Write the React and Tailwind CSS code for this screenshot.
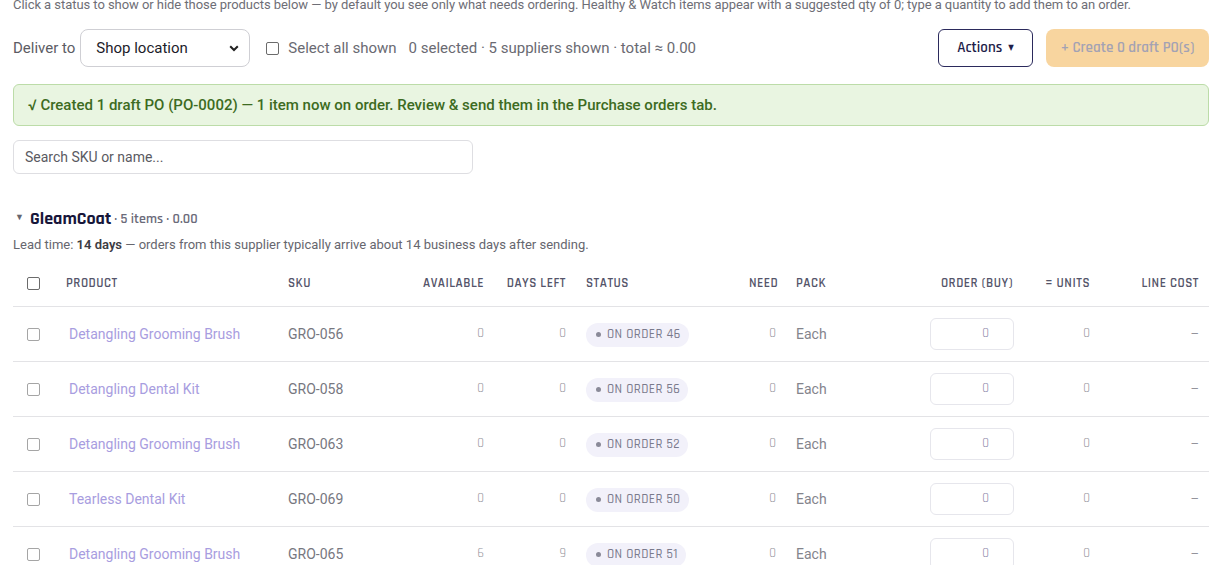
import React from "react";

const DISPLAY = { fontFamily: '"Rajdhani","Liberation Sans Narrow","DejaVu Sans Condensed","Roboto Condensed",sans-serif' };

const rows = [
  { name: "Detangling Grooming Brush", sku: "GRO-056", avail: 0, days: 0, order: 46 },
  { name: "Detangling Dental Kit", sku: "GRO-058", avail: 0, days: 0, order: 56 },
  { name: "Detangling Grooming Brush", sku: "GRO-063", avail: 0, days: 0, order: 52 },
  { name: "Tearless Dental Kit", sku: "GRO-069", avail: 0, days: 0, order: 50 },
  { name: "Detangling Grooming Brush", sku: "GRO-065", avail: 6, days: 9, order: 51 },
];

function Box({ dark }) {
  return (
    <span
      className={
        "inline-block w-[13px] h-[13px] rounded-[2px] border bg-white align-middle " +
        (dark ? "border-[#6b6b6b]" : "border-[#a5a5a5]")
      }
    />
  );
}

export default function App() {
  return (
    <div className="w-[1232px] h-[565px] overflow-hidden bg-white pl-[13px]" style={{ fontFamily: 'Roboto,"Liberation Sans",Arial,sans-serif' }}>
      <div className="w-[1196px]">
        <div className="mt-[-4px] text-[13px] leading-[18px] text-[#6e6e76] whitespace-nowrap tracking-[-0.05px]">
          Click a status to show or hide those products below — by default you see only what needs ordering. Healthy &amp; Watch items appear with a suggested qty of 0; type a quantity to add them to an order.
        </div>

        <div className="mt-[15px] flex items-center h-[38px]">
          <span className="text-[15px] text-[#5c5c64]">Deliver to</span>
          <div className="ml-[5px] relative w-[170px] h-[38px] rounded-lg border border-[#cfcfd4] flex items-center pl-[15px] text-[15px] text-[#1c1c2a]">
            Shop location
            <svg className="absolute right-[10px] top-[15px]" width="10" height="7" viewBox="0 0 10 7">
              <path d="M1.2 1.2 L5 5 L8.8 1.2" fill="none" stroke="#222" strokeWidth="2" />
            </svg>
          </div>
          <span className="ml-[16px] inline-flex items-center">
            <Box dark />
          </span>
          <span className="ml-[9px] text-[15px] text-[#6a6a72]">Select all shown</span>
          <span className="ml-[12px] text-[15px] text-[#6a6a72]">0 selected · 5 suppliers shown · total ≈ 0.00</span>
          <div className="flex-1" />
          <button
            className="w-[95px] h-[38px] rounded-md border border-[#2b2a5c] text-[15px] font-semibold text-[#1f1e4a] flex items-center justify-center gap-[6px]"
            style={DISPLAY}
          >
            Actions <span className="text-[8px]">▼</span>
          </button>
          <button
            className="ml-[13px] w-[163px] h-[38px] rounded-lg bg-[#f8d59f] text-[15px] font-semibold text-[#a3a2b4] flex items-center justify-center"
            style={DISPLAY}
          >
            + Create 0 draft PO(s)
          </button>
        </div>

        <div className="mt-[17px] h-[42px] rounded-md border border-[#bcdca8] bg-[#e9f5e1] flex items-center pl-[14px] text-[15px] font-medium text-[#3d6b22]">
          √ Created 1 draft PO (PO-0002) — 1 item now on order. Review &amp; send them in the Purchase orders tab.
        </div>

        <div className="mt-[14px] w-[460px] h-[34px] rounded-md border border-[#dedee2] flex items-center pl-[11px] text-[14px] text-[#5a5a62]">
          Search SKU or name...
        </div>

        <div className="mt-[33px] h-[22px] flex items-center">
          <span className="ml-[2px] text-[9px] text-[#66666e]">▼</span>
          <span className="ml-[6px] text-[18px] font-bold text-[#17163a]" style={DISPLAY}>GleamCoat</span>
          <span className="ml-[3px] text-[14px] font-semibold text-[#6b6b7a] mt-[2px]" style={DISPLAY}>· 5 items · 0.00</span>
        </div>

        <div className="mt-[7px] text-[13px] leading-[18px] text-[#66666e]">
          Lead time: <b className="font-semibold text-[#3c3c44]">14 days</b> — orders from this supplier typically arrive about 14 business days after sending.
        </div>

        <table className="mt-[8px] w-[1196px] table-fixed border-collapse">
          <colgroup>
            <col className="w-[43px]" />
            <col className="w-[222px]" />
            <col className="w-[122px]" />
            <col className="w-[94px]" />
            <col className="w-[82px]" />
            <col className="w-[163px]" />
            <col className="w-[47px]" />
            <col className="w-[113px]" />
            <col className="w-[124px]" />
            <col className="w-[77px]" />
            <col className="w-[109px]" />
          </colgroup>
          <thead>
            <tr className="h-[44px] border-b border-[#e3e3e6] text-[13px] font-semibold tracking-[0.5px] text-[#55556a]" style={DISPLAY}>
              <th className="pl-[14px] text-left font-semibold"><Box dark /></th>
              <th className="px-[10px] text-left font-semibold">PRODUCT</th>
              <th className="px-[10px] text-left font-semibold">SKU</th>
              <th className="px-[10px] text-right font-semibold">AVAILABLE</th>
              <th className="px-[10px] text-right font-semibold">DAYS LEFT</th>
              <th className="px-[10px] text-left font-semibold">STATUS</th>
              <th className="px-[10px] text-right font-semibold">NEED</th>
              <th className="px-[10px] text-left font-semibold">PACK</th>
              <th className="px-[10px] text-right font-semibold">ORDER (BUY)</th>
              <th className="px-[10px] text-right font-semibold">= UNITS</th>
              <th className="px-[10px] text-right font-semibold">LINE COST</th>
            </tr>
          </thead>
          <tbody>
            {rows.map((r, i) => (
              <tr key={i} className="h-[55px] border-b border-[#e3e3e6]">
                <td className="pl-[14px]"><Box /></td>
                <td className="px-[10px] text-[14px] text-[#a89de0] whitespace-nowrap"><span className="ml-[3px] relative top-[1px]">{r.name}</span></td>
                <td className="px-[10px] text-[14px] text-[#77777f]"><span className="relative top-[1px]">{r.sku}</span></td>
                <td className="px-[10px] text-right text-[13px] text-[#94949c]" style={DISPLAY}>{r.avail}</td>
                <td className="px-[10px] text-right text-[13px] text-[#94949c]" style={DISPLAY}>{r.days}</td>
                <td className="px-[10px]">
                  <span className="inline-flex items-center h-[24px] pl-[10px] pr-[8px] rounded-full bg-[#f2f1fa] text-[13px] font-medium tracking-[0.4px] text-[#7a7a8c] whitespace-nowrap" style={DISPLAY}>
                    <span className="w-[5px] h-[5px] rounded-full bg-[#8a8a98] mr-[6px]" />
                    ON ORDER {r.order}
                  </span>
                </td>
                <td className="px-[10px] text-right text-[13px] text-[#94949c]" style={DISPLAY}>0</td>
                <td className="px-[10px] text-[14px] text-[#84848c]"><span className="relative top-[1px]">Each</span></td>
                <td className="pr-[9px] text-right">
                  <span className="inline-flex w-[84px] h-[32px] rounded-md border border-[#e6e6ec] items-center justify-end pr-[24px] text-[13px] text-[#8a86a8]" style={DISPLAY}>0</span>
                </td>
                <td className="px-[10px] text-right text-[13px] text-[#94949c]" style={DISPLAY}>0</td>
                <td className="px-[10px] text-right text-[13px] text-[#94949c]">–</td>
              </tr>
            ))}
          </tbody>
        </table>
      </div>
    </div>
  );
}
